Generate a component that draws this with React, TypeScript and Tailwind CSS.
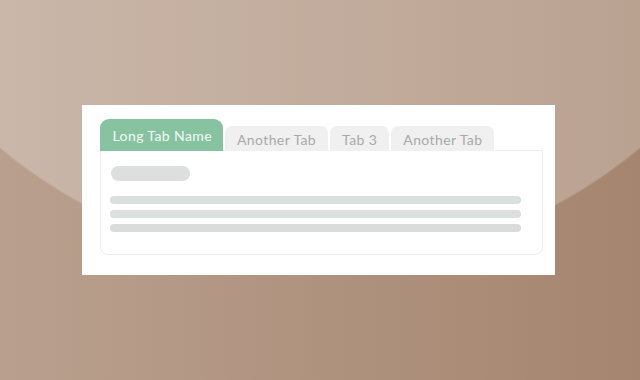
const tabs = ['Long Tab Name', 'Another Tab', 'Tab 3', 'Another Tab'];

export default function App() {
  const active = 0;

  return (
    <div className="w-[640px] h-[380px] pr-[4px] flex items-center justify-center [background:radial-gradient(circle_500px_at_320px_-235px,rgba(255,255,255,0.24)_99.6%,transparent_100%),linear-gradient(to_right,#b9a08e,#a5856f)] font-['Lato','Open_Sans',sans-serif]">
      <div className="w-[473px] h-[170px] bg-white pl-[18px] pr-[12px] pt-[14px] pb-[20px] flex flex-col">
        <div className="flex items-end gap-[2px] relative z-10 -mb-[1px]">
          {tabs.map((t, i) =>
            i === active ? (
              <div
                key={i}
                className="h-[32px] pl-[13px] pr-[11px] flex items-center rounded-t-[9px] bg-[#87c2a1] text-[#f4fbf6] text-[14px] tracking-[0.4px]"
              >
                {t}
              </div>
            ) : (
              <div
                key={i}
                className="h-[25px] px-[12px] flex items-center rounded-t-[7px] bg-[#f0f0f0] text-[#a9a9a9] text-[14px] tracking-[0.4px] pt-[2px]"
              >
                {t}
              </div>
            )
          )}
        </div>
        <div className="flex-1 border border-[#ededed] rounded-b-[8px] pl-[9px] pr-[21px] pt-[15px]">
          <div className="ml-[1px] w-[79px] h-[15px] rounded-full bg-[#dcdfdd]" />
          <div className="mt-[15px] flex flex-col gap-[6px]">
            <div className="h-[8px] rounded-full bg-[#dbdfdd]" />
            <div className="h-[8px] rounded-full bg-[#dbdfdd]" />
            <div className="h-[8px] rounded-full bg-[#d9dcda]" />
          </div>
        </div>
      </div>
    </div>
  );
}
